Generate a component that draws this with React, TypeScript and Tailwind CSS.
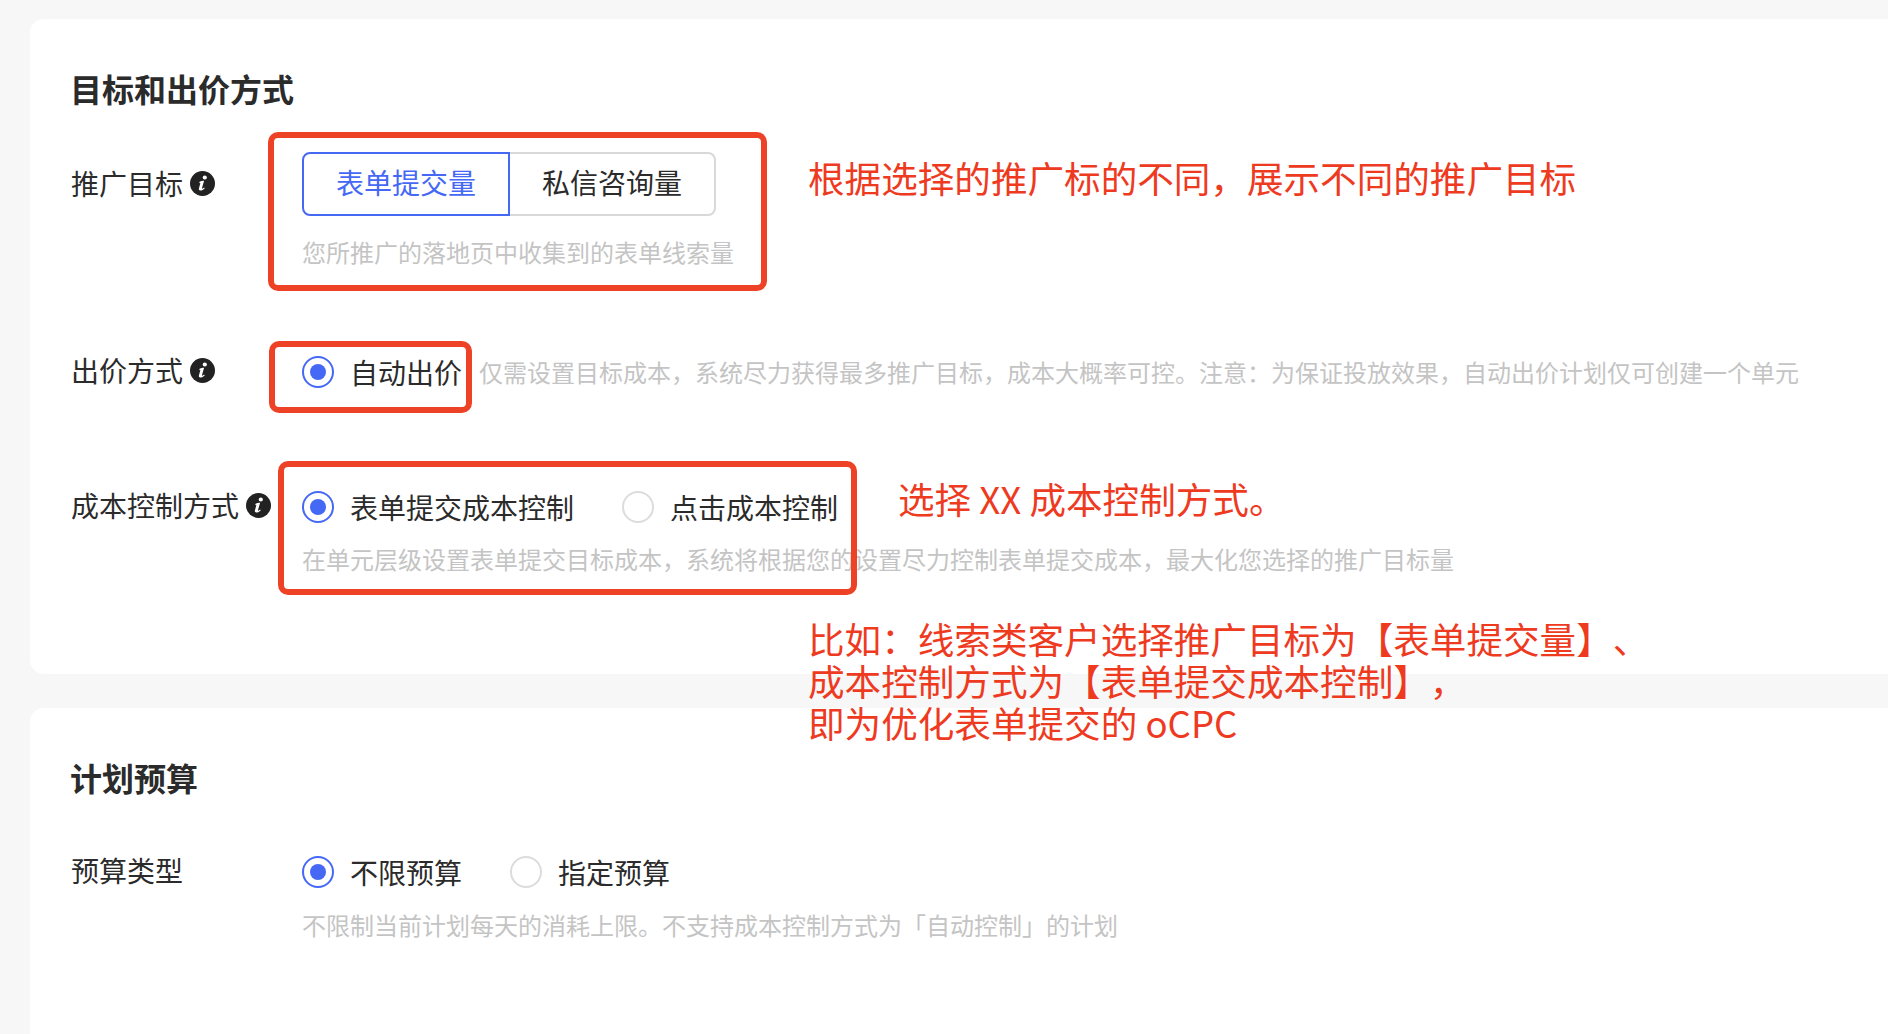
import React from "react";

const sans = "font-['PingFang_SC','Noto_Sans_CJK_SC','Noto_Sans',sans-serif]";

function InfoIcon() {
  return (
    <svg width="25" height="25" viewBox="0 0 25 25" className="shrink-0">
      <circle cx="12.5" cy="12.5" r="12.5" fill="#222222" />
      <circle cx="14.8" cy="6.500" r="2.1" fill="#ffffff" />
      <path
        d="M9.2 10.900c1.600-.9 3.200-1.300 4.900-1.200l-2.100 7.400c-.1.5.3.7.8.4l1.400-.9.5.8c-1.300 1.200-2.900 2.100-4.300 2.100-1.200 0-1.800-.8-1.500-2l1.500-5.400-.6.2z"
        fill="#ffffff"
      />
    </svg>
  );
}

function Radio({ label, checked }: { label: string; checked?: boolean }) {
  return (
    <div className="flex items-center gap-4 shrink-0">
      <span
        className={
          checked
            ? "flex h-8 w-8 items-center justify-center rounded-full border-2 border-[#4569f5] bg-white"
            : "flex h-8 w-8 items-center justify-center rounded-full border-2 border-[#dcdcdc] bg-white"
        }
      >
        {checked && <span className="h-4 w-4 rounded-full bg-[#4569f5]" />}
      </span>
      <span className="text-[28px] leading-10 text-[#2b2b2b]">{label}</span>
    </div>
  );
}

function Label({ text, info }: { text: string; info?: boolean }) {
  return (
    <div className="-mt-0.5 ml-px flex h-10 w-[231px] shrink-0 items-center gap-[7px] text-[28px] leading-10 text-[#2b2b2b]">
      <span>{text}</span>
      {info && <InfoIcon />}
    </div>
  );
}

function Hint({ children, className }: { children: React.ReactNode; className?: string }) {
  return <div className={"text-2xl leading-8 whitespace-nowrap text-[#c4c4c4] " + (className ?? "")}>{children}</div>;
}

function Title({ children }: { children: React.ReactNode }) {
  return <h2 className="text-[32px] leading-10 font-semibold text-[#2b2b2b]">{children}</h2>;
}

function RedBox({ className }: { className: string }) {
  return <div className={"absolute rounded-[10px] border-[6px] border-[#ee4227] " + className} />;
}

function Note({ children, className }: { children: React.ReactNode; className: string }) {
  return <div className={"absolute text-[36.6px] leading-[42px] whitespace-nowrap text-[#ee3a1f] " + className}>{children}</div>;
}

export default function App() {
  return (
    <div className={"relative h-[1034px] w-[1888px] overflow-hidden bg-[#f7f7f7] pt-[19px] pl-[30px] [text-spacing-trim:space-all] " + sans}>
      <section className="h-[655px] rounded-l-[14px] bg-white pt-[49px] pl-[40px]">
        <Title>目标和出价方式</Title>

        <div className="mt-[44px] flex">
          <div className="pt-[13px]">
            <Label text="推广目标" info />
          </div>
          <div>
            <div className="flex h-16 w-[414px] text-[28px] leading-10">
              <div className="flex w-[208px] items-center justify-center rounded-l-lg border-2 border-[#4569f5] pb-1 text-[#4569f5]">表单提交量</div>
              <div className="flex w-[206px] items-center justify-center rounded-r-lg border-2 border-l-0 border-[#d9d9d9] pb-1 text-[#2b2b2b]">私信咨询量</div>
            </div>
            <Hint className="mt-5">您所推广的落地页中收集到的表单线索量</Hint>
          </div>
        </div>

        <div className="mt-[84px] flex">
          <Label text="出价方式" info />
          <div className="flex items-center">
            <Radio label="自动出价" checked />
            <Hint className="ml-[17px]">仅需设置目标成本，系统尽力获得最多推广目标，成本大概率可控。注意：为保证投放效果，自动出价计划仅可创建一个单元</Hint>
          </div>
        </div>

        <div className="mt-[95px] flex">
          <Label text="成本控制方式" info />
          <div>
            <div className="flex gap-12">
              <Radio label="表单提交成本控制" checked />
              <Radio label="点击成本控制" />
            </div>
            <Hint className="mt-4">在单元层级设置表单提交目标成本，系统将根据您的设置尽力控制表单提交成本，最大化您选择的推广目标量</Hint>
          </div>
        </div>
      </section>

      <section className="mt-[34px] h-[340px] rounded-l-[14px] bg-white pt-[49px] pl-[40px]">
        <Title>计划预算</Title>
        <div className="mt-[55px] flex">
          <Label text="预算类型" />
          <div>
            <div className="flex gap-12">
              <Radio label="不限预算" checked />
              <Radio label="指定预算" />
            </div>
            <Hint className="mt-[17px]">不限制当前计划每天的消耗上限。不支持成本控制方式为「自动控制」的计划</Hint>
          </div>
        </div>
      </section>

      <RedBox className="top-[132px] left-[268px] h-[159px] w-[499px]" />
      <RedBox className="top-[341px] left-[269px] h-[72px] w-[203px]" />
      <RedBox className="top-[461px] left-[278px] h-[134px] w-[579px]" />

      <Note className="top-[157px] left-[808px]">根据选择的推广标的不同，展示不同的推广目标</Note>
      <Note className="top-[478px] left-[898px]">选择 XX 成本控制方式。</Note>
      <Note className="top-[618px] left-[808px]">
        比如：线索类客户选择推广目标为【表单提交量】、
        <br />
        成本控制方式为【表单提交成本控制】，
        <br />
        即为优化表单提交的 oCPC
      </Note>
    </div>
  );
}
